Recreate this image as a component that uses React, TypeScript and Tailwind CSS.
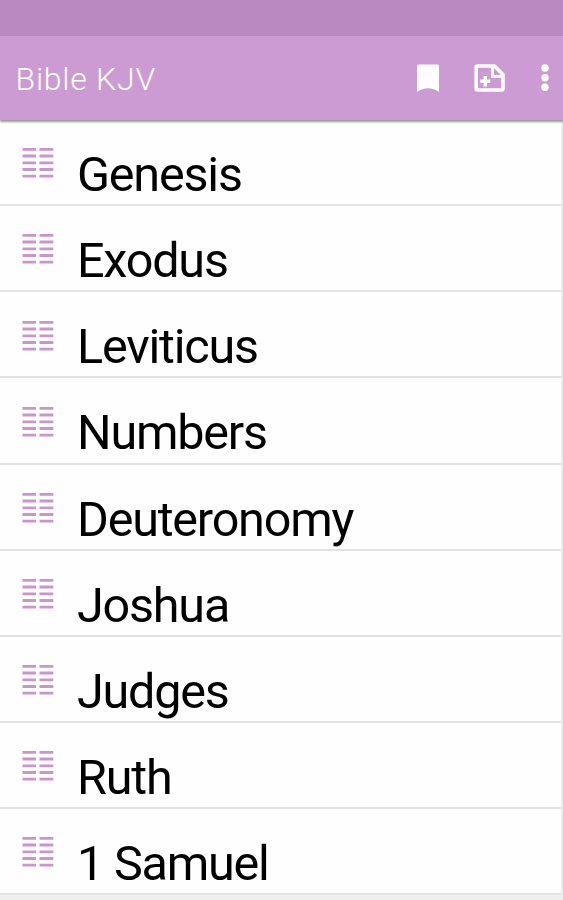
import React from "react";

const books = [
  "Genesis",
  "Exodus",
  "Leviticus",
  "Numbers",
  "Deuteronomy",
  "Joshua",
  "Judges",
  "Ruth",
  "1 Samuel",
];

const BookIcon = () => (
  <svg className="w-8 h-8 shrink-0" viewBox="0 0 32 32" fill="none" stroke="#c995cd" strokeWidth="2.8">
    <path d="M0.5 2.3H14M17.5 2.3H31.3M0.5 9H14M17.5 9H31.3M0.5 15.8H14M17.5 15.8H31.3M0.5 22.5H14M17.5 22.5H31.3M0.5 29.2H14M17.5 29.2H31.3" />
  </svg>
);

const BookmarkIcon = () => (
  <svg className="w-[22px] h-[28px]" viewBox="0 0 22 28" fill="white">
    <path d="M2 0.5H20Q22 0.5 22 2.5V28Q11 20.5 0 28V2.5Q0 0.5 2 0.5Z" />
  </svg>
);

const AddNoteIcon = () => (
  <svg className="w-[31px] h-[28px]" viewBox="0 0 31 28" fill="none" stroke="white">
    <path d="M3.2 2H20.5L29 10.5V24.5Q29 26 27.5 26H3.7Q2.2 26 2.2 24.5V3.2Q2.2 2 3.2 2Z" strokeWidth="3.6" strokeLinejoin="round" />
    <path d="M18.5 2V12.5H29" strokeWidth="3" />
    <path d="M11.3 12V22.5M6.3 17.2H16.3" strokeWidth="3.4" />
  </svg>
);

const MenuIcon = () => (
  <svg className="w-2 h-[28px]" viewBox="0 0 8 28" fill="white">
    <circle cx="4" cy="4" r="3.7" />
    <circle cx="4" cy="13.7" r="3.7" />
    <circle cx="4" cy="23.2" r="3.7" />
  </svg>
);

const App = () => {
  return (
    <div className="w-full h-[900px] overflow-hidden flex flex-col bg-[#efefef] font-['Roboto','Noto_Sans',sans-serif]">
      <div className="h-9 shrink-0 bg-[#ba89c1]" />
      <header className="relative z-10 h-[84px] shrink-0 flex items-center bg-[#cd9bd4] pl-[15.5px] pr-[14px] shadow-[0_2px_2px_rgba(0,0,0,0.4)]">
        <h1 className="flex-1 pt-[1px] text-[32px] leading-9 font-light tracking-[0.75px] text-white">Bible KJV</h1>
        <div className="flex items-center">
          <button className="mr-[35px]"><BookmarkIcon /></button>
          <button className="mr-[36px]"><AddNoteIcon /></button>
          <button><MenuIcon /></button>
        </div>
      </header>
      <ul className="shrink-0 bg-[#fefefe] border-r-2 border-[#ececec]">
        {books.map((book) => (
          <li key={book} className="h-[86.15px] flex items-start pl-[22px] border-b-2 border-[#e2e2e2]">
            <div className="pt-[27.3px]"><BookIcon /></div>
            <span className="ml-[23px] pt-[31px] text-[48.5px] leading-[48px] tracking-[-1.2px] text-black">{book}</span>
          </li>
        ))}
      </ul>
    </div>
  );
};

export default App;
